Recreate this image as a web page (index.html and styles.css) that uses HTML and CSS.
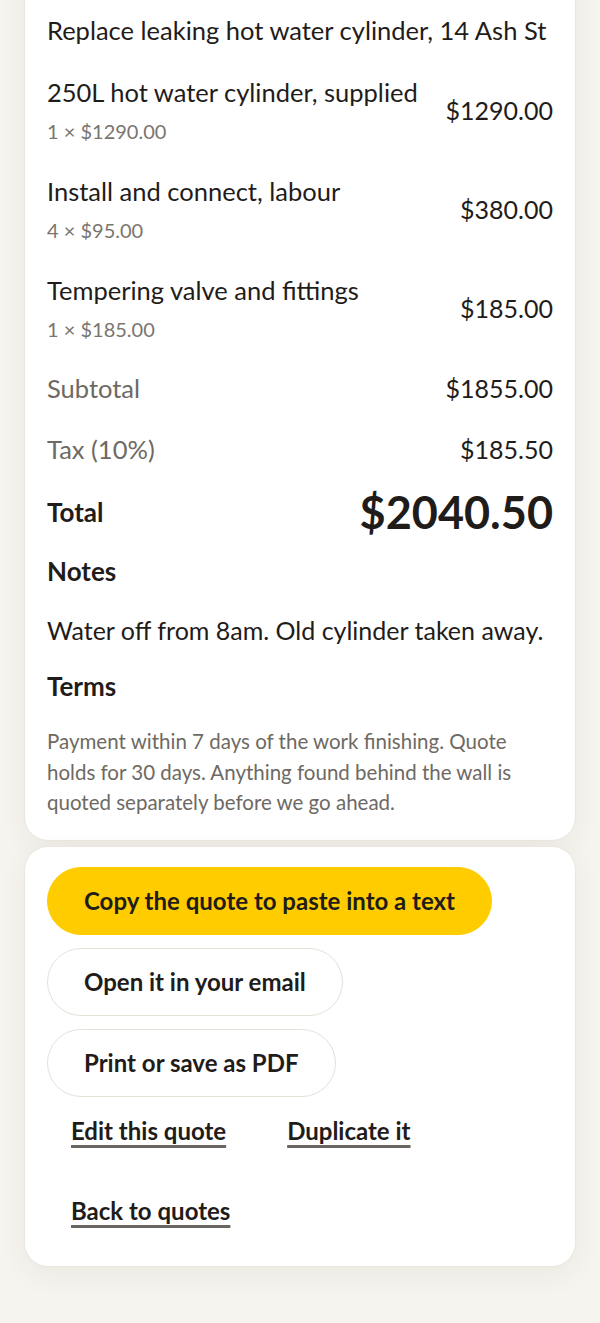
FILE: index.html
```html
<!DOCTYPE html>
<html lang="en">
<head>
<meta charset="utf-8">
<title>Quote</title>
<link rel="stylesheet" href="styles.css">
</head>
<body>
<main class="page">
  <section class="card card-quote">
    <h1 class="job-title">Replace leaking hot water cylinder, 14 Ash St</h1>
    <div class="items">
      <div class="item">
        <div class="item-main">
          <div class="item-name">250L hot water cylinder, supplied</div>
          <div class="item-sub">1 × $1290.00</div>
        </div>
        <div class="item-price">$1290.00</div>
      </div>
      <div class="item">
        <div class="item-main">
          <div class="item-name">Install and connect, labour</div>
          <div class="item-sub">4 × $95.00</div>
        </div>
        <div class="item-price">$380.00</div>
      </div>
      <div class="item">
        <div class="item-main">
          <div class="item-name">Tempering valve and fittings</div>
          <div class="item-sub">1 × $185.00</div>
        </div>
        <div class="item-price">$185.00</div>
      </div>
    </div>
    <div class="sum-row sum-sub"><span class="sum-label">Subtotal</span><span class="sum-value">$1855.00</span></div>
    <div class="sum-row sum-tax"><span class="sum-label">Tax (10%)</span><span class="sum-value">$185.50</span></div>
    <div class="sum-row sum-total"><span class="total-label">Total</span><span class="total-value">$2040.50</span></div>
    <h2 class="section-head notes-head">Notes</h2>
    <p class="notes-text">Water off from 8am. Old cylinder taken away.</p>
    <h2 class="section-head terms-head">Terms</h2>
    <p class="terms-text">Payment within 7 days of the work finishing. Quote holds for 30 days. Anything found behind the wall is quoted separately before we go ahead.</p>
  </section>
  <section class="card card-actions">
    <div class="buttons">
      <button class="btn btn-primary" type="button">Copy the quote to paste into a text</button>
      <button class="btn btn-ghost" type="button">Open it in your email</button>
      <button class="btn btn-ghost" type="button">Print or save as PDF</button>
    </div>
    <div class="links">
      <a class="link" href="#">Edit this quote</a>
      <a class="link" href="#">Duplicate it</a>
    </div>
    <div class="links links-back">
      <a class="link" href="#">Back to quotes</a>
    </div>
  </section>
</main>
</body>
</html>
```
FILE: styles.css
```css
* { box-sizing: border-box; }
html, body { margin: 0; padding: 0; }
body {
  background: #f6f4ef;
  color: #1f1c1a;
  font-family: "Lato", "Noto Sans", sans-serif;
  -webkit-font-smoothing: antialiased;
}
.page {
  display: flex;
  flex-direction: column;
  gap: 5px;
  padding: 0 24px 58px;
}
.card {
  background: #ffffff;
  border: 1px solid #ebe6df;
  border-radius: 24px;
  box-shadow: 0 8px 28px rgba(70, 50, 20, 0.06);
}
.card-quote {
  margin-top: -40px;
  padding: 52px 22px 22px;
  display: flex;
  flex-direction: column;
}
.job-title {
  margin: 0;
  font-size: 25.5px;
  font-weight: 400;
  line-height: 34px;
}
.items {
  display: flex;
  flex-direction: column;
  gap: 29px;
  margin-top: 28px;
}
.item {
  display: flex;
  align-items: center;
  justify-content: space-between;
  gap: 16px;
}
.item-main { display: flex; flex-direction: column; gap: 8px; }
.item-name { font-size: 25.5px; line-height: 34px; }
.item-sub { font-size: 20px; line-height: 28px; color: #7a756f; }
.item-price { font-size: 25px; line-height: 34px; white-space: nowrap; }
.sum-row {
  display: flex;
  justify-content: space-between;
  align-items: center;
  font-size: 25.5px;
  line-height: 34px;
}
.sum-value { font-size: 25px; }
.sum-sub { margin-top: 28px; }
.sum-tax { margin-top: 27px; }
.sum-label { color: #6e6963; }
.sum-total { margin-top: 22px; line-height: 48px; }
.total-label { font-size: 26px; font-weight: 700; }
.total-value { font-size: 45px; font-weight: 700; }
.section-head {
  margin: 0;
  font-size: 26px;
  font-weight: 700;
  line-height: 34px;
}
.notes-head { margin-top: 18px; }
.notes-text {
  margin: 25px 0 0;
  font-size: 25px;
  line-height: 34px;
  white-space: nowrap;
}
.terms-head { margin-top: 22px; }
.terms-text {
  margin: 23px 0 0;
  max-width: 480px;
  font-size: 20.5px;
  line-height: 30.5px;
  color: #6e6963;
}
.card-actions {
  padding: 20px 22px 33px;
  display: flex;
  flex-direction: column;
}
.buttons {
  display: flex;
  flex-direction: column;
  align-items: flex-start;
  gap: 13px;
}
.btn {
  font-family: inherit;
  font-size: 24px;
  font-weight: 700;
  color: #1f1c1a;
  height: 68px;
  padding: 0 36px;
  border-radius: 34px;
  cursor: pointer;
}
.btn-primary {
  background: #ffcc00;
  border: 1px solid #ffcc00;
}
.btn-ghost {
  background: #ffffff;
  border: 1px solid #e6e1d8;
}
.links {
  display: flex;
  gap: 13px;
  margin-top: 12px;
}
.links-back { margin-top: 36px; }
.link {
  display: inline-flex;
  align-items: center;
  min-height: 44px;
  padding: 0 24px;
  font-size: 24px;
  font-weight: 700;
  color: #1f1c1a;
  text-decoration: underline;
  text-decoration-color: #6b665f;
  text-decoration-thickness: 3px;
  text-underline-offset: 5px;
}
```
